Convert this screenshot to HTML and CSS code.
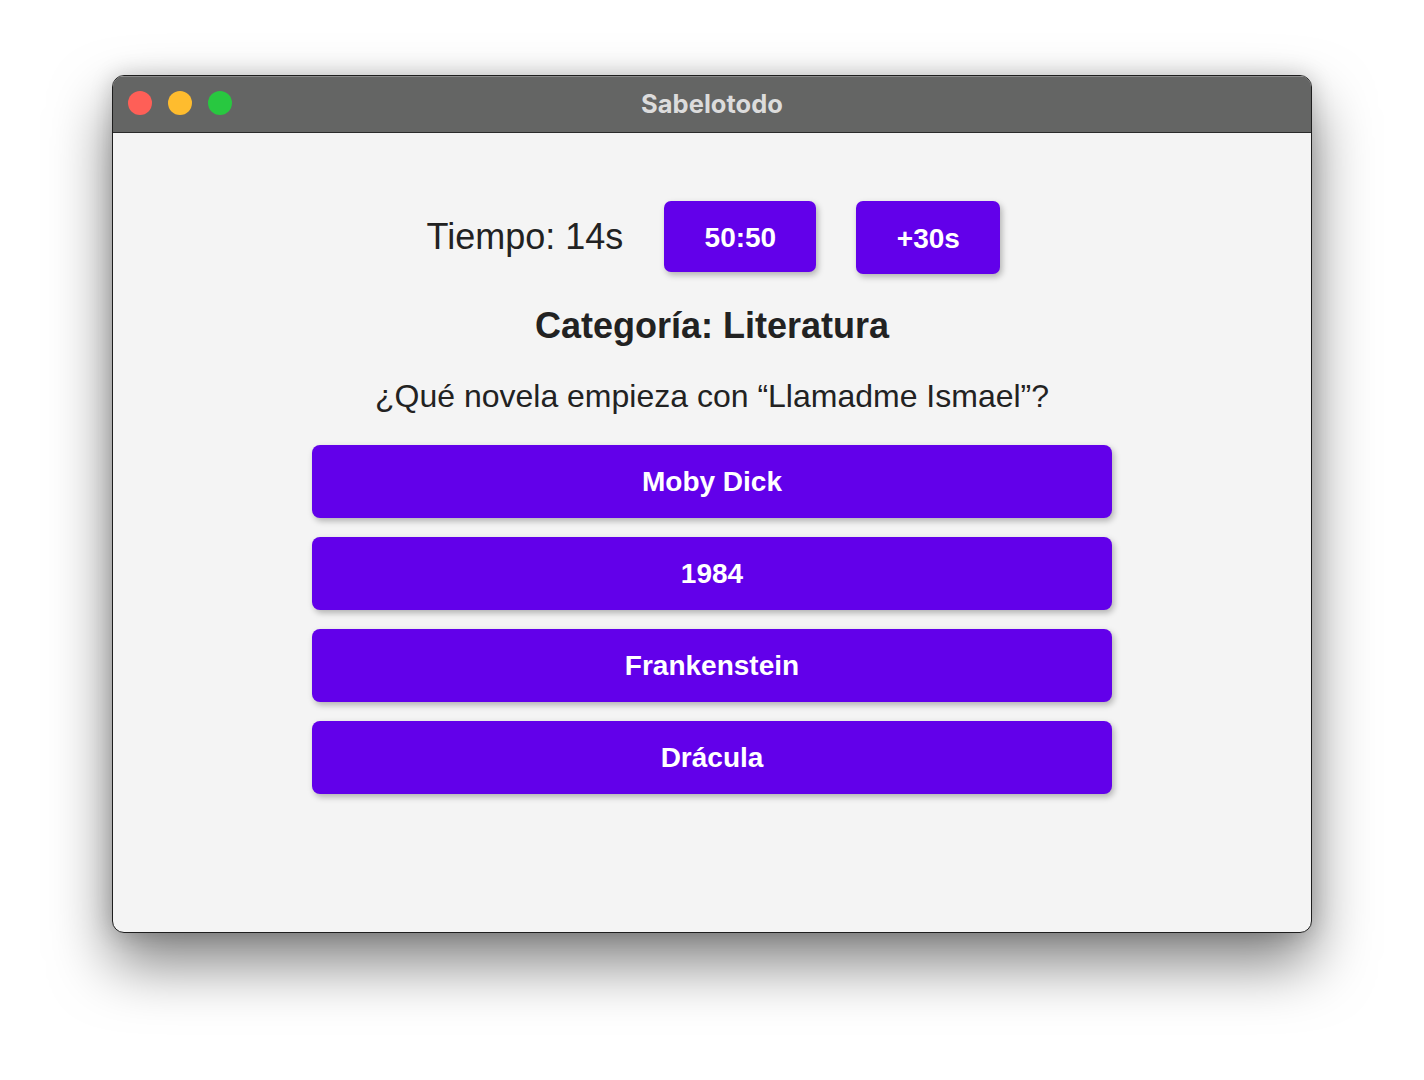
FILE: index.html
```html
<!DOCTYPE html>
<html lang="es">
<head>
<meta charset="utf-8">
<title>Sabelotodo</title>
<link rel="stylesheet" href="styles.css">
</head>
<body>
<div class="window">
  <div class="titlebar">
    <div class="lights">
      <span class="light red"></span>
      <span class="light yellow"></span>
      <span class="light green"></span>
    </div>
    <div class="title">Sabelotodo</div>
  </div>
  <div class="content">
    <div class="toprow">
      <div class="timer">Tiempo: 14s</div>
      <button class="btn small b1">50:50</button>
      <button class="btn small b2">+30s</button>
    </div>
    <div class="category">Categoría: Literatura</div>
    <div class="question">¿Qué novela empieza con “Llamadme Ismael”?</div>
    <div class="answers">
      <button class="btn answer">Moby Dick</button>
      <button class="btn answer">1984</button>
      <button class="btn answer">Frankenstein</button>
      <button class="btn answer">Drácula</button>
    </div>
  </div>
</div>
</body>
</html>
```
FILE: styles.css
```css
html, body {
  margin: 0;
  padding: 0;
  background: #ffffff;
}
body {
  width: 1424px;
  height: 1080px;
  overflow: hidden;
  padding-top: 75px;
  box-sizing: border-box;
}
.window {
  margin-left: 112px;
  width: 1200px;
  height: 858px;
  box-sizing: border-box;
  border: 1px solid #1e1e1e;
  border-radius: 12px;
  overflow: hidden;
  background: #f4f4f4;
  box-shadow: 0 30px 60px rgba(0,0,0,0.5), 0 0 22px rgba(0,0,0,0.18);
  display: flex;
  flex-direction: column;
}
.titlebar {
  height: 57px;
  flex: 0 0 57px;
  box-sizing: border-box;
  background: #646564;
  border-bottom: 1px solid #2a2a2a;
  box-shadow: inset 0 1px 0 rgba(255,255,255,0.25);
  position: relative;
  display: flex;
  align-items: center;
  justify-content: center;
}
.lights {
  position: absolute;
  left: 15px;
  top: 15px;
  display: flex;
  gap: 16px;
}
.light {
  width: 24px;
  height: 24px;
  border-radius: 50%;
  display: block;
}
.red { background: #fe5f57; }
.yellow { background: #febc2e; }
.green { background: #28c840; }
.title {
  font-family: Inter, "Noto Sans", sans-serif;
  font-weight: 700;
  font-size: 25.5px;
  color: #dcdcdc;
  margin-top: -2px;
}
.content {
  flex: 1;
  display: flex;
  flex-direction: column;
  align-items: center;
  padding-top: 67px;
  font-family: "Liberation Sans", Arial, sans-serif;
  color: #222222;
}
.toprow {
  display: flex;
  align-items: flex-start;
  margin-left: 3px;
}
.timer {
  font-size: 36px;
  color: #222;
  align-self: center;
  margin-right: 41px;
}
.btn {
  font-family: "Liberation Sans", Arial, sans-serif;
  font-weight: 700;
  color: #ffffff;
  background: #6200ea;
  border: none;
  cursor: pointer;
  box-shadow: 2px 3px 6px rgba(0,0,0,0.28);
}
.small {
  font-size: 28px;
  border-radius: 7px;
  padding-top: 3px;
  margin-top: 1px;
}
.b1 { width: 152px; height: 71px; margin-right: 40px; }
.b2 { width: 144px; height: 73px; }
.category {
  margin-top: 31px;
  font-size: 36px;
  font-weight: 700;
  color: #222;
}
.question {
  margin-top: 31px;
  font-size: 32px;
  color: #222;
}
.answers {
  margin-top: 30px;
  display: flex;
  flex-direction: column;
  gap: 19px;
}
.answer {
  width: 800px;
  height: 73px;
  border-radius: 8px;
  font-size: 28px;
}
```
